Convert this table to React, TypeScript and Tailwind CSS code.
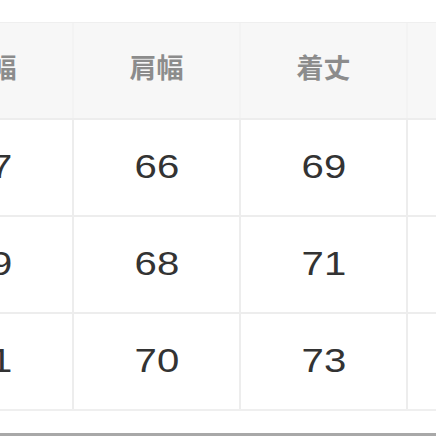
import React from "react";

const headers = ["身幅", "肩幅", "着丈", "袖丈"];
const rows = [
  ["57", "66", "69", "60"],
  ["59", "68", "71", "61"],
  ["61", "70", "73", "62"],
];

export default function App() {
  return (
    <div className="w-[436px] h-[436px] overflow-hidden bg-white flex flex-col">
      <div className="h-[22px] shrink-0" />
      <div className="ml-[-93px] w-[669px] shrink-0 flex flex-col gap-[2px] bg-[#ededed] border-t border-[#efefef] border-b-2 border-b-[#efefef]">
        <div className="grid grid-cols-[165px_165px_165px_165px] gap-[2px] bg-[#f3f3f3]">
          {headers.map((h) => (
            <div
              key={h}
              className="h-[95px] bg-[#f7f7f7] flex items-center justify-center pb-[6px] text-[27px] font-bold text-[#8c8c8c]"
              style={{ fontFamily: '"Noto Sans CJK JP", "Noto Sans", sans-serif' }}
            >
              {h}
            </div>
          ))}
        </div>
        {rows.map((r, i) => (
          <div key={i} className="grid grid-cols-[165px_165px_165px_165px] gap-[2px]">
            {r.map((v, j) => (
              <div
                key={j}
                className="h-[95px] bg-white flex items-center justify-center pb-[2px] text-[34px] text-[#333333]"
                style={{ fontFamily: '"Liberation Sans", Arial, sans-serif' }}
              >
                <span className="inline-block scale-x-[1.18]">{v}</span>
              </div>
            ))}
          </div>
        ))}
      </div>
      <div className="flex-1" />
      <div className="h-[3px] shrink-0 bg-[#a8a8a8]" />
    </div>
  );
}
